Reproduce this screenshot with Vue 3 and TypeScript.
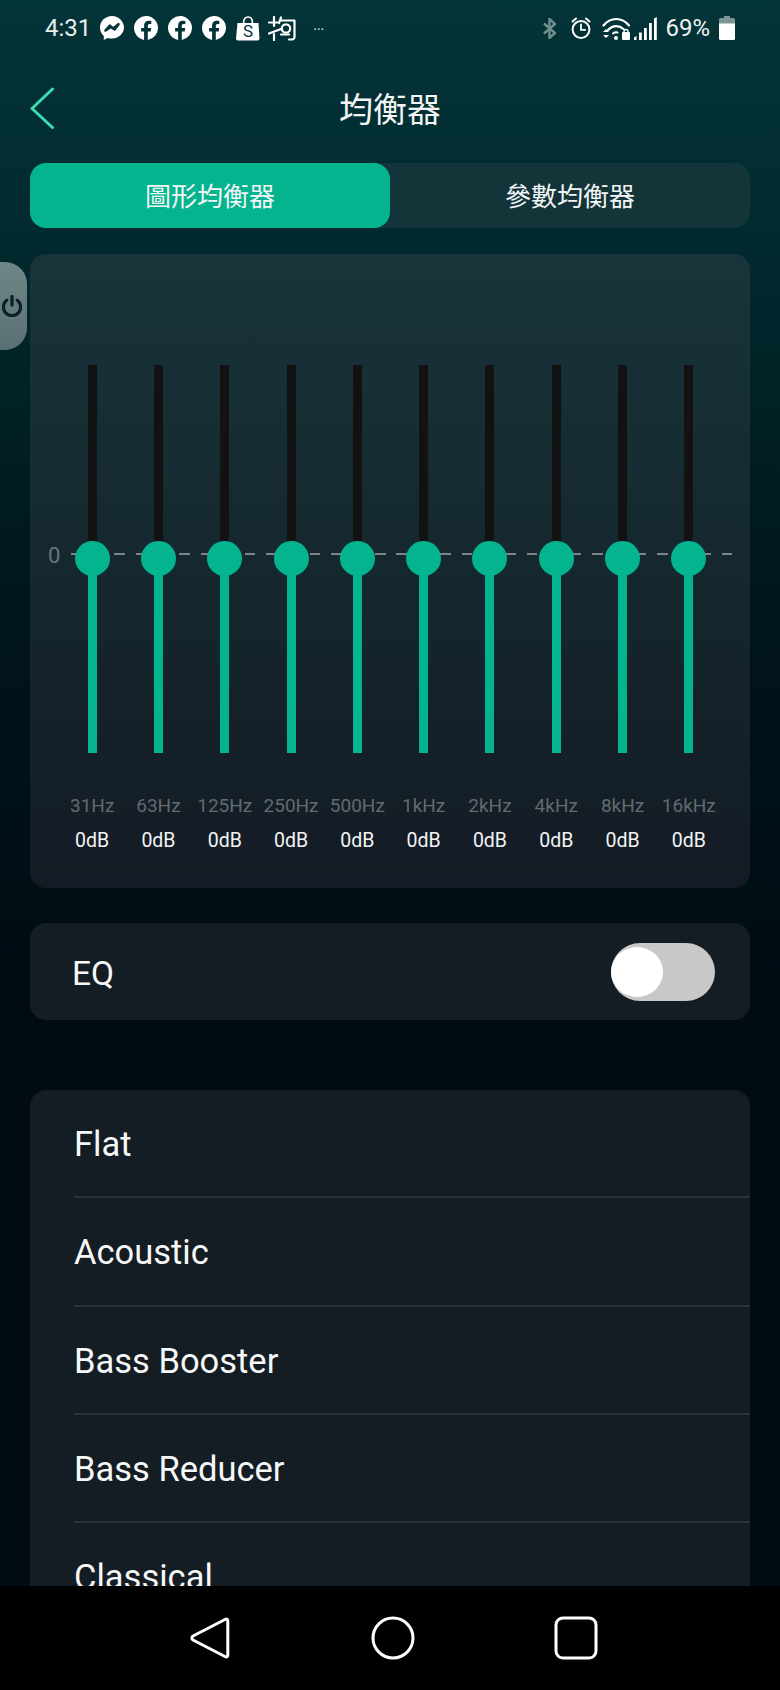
<script setup lang="ts">
const bands: string[] = ['31Hz','63Hz','125Hz','250Hz','500Hz','1kHz','2kHz','4kHz','8kHz','16kHz']
const presets: string[] = ['Flat','Acoustic','Bass Booster','Bass Reducer','Classical']
</script>

<template>
  <div class="phone">
    <main class="screen">
      <div class="status">
        <div class="status-left">
          <span class="time">4:31</span>
          <svg class="ic24" viewBox="0 0 24 24"><path fill="#fff" d="M12 0C5.3 0 0 5 0 11.5c0 3.4 1.4 6.4 3.8 8.4V24l3.9-2.1c1.4.4 2.8.6 4.3.6 6.7 0 12-5 12-11S18.700 0 12 0z"/><path fill="none" stroke="#04343a" stroke-width="2.600" stroke-linejoin="round" stroke-linecap="round" d="M5.500 14.500l4.300-4.800 3.400 2.800 5.300-4.300-4 5.300-3.600-2.500z"/></svg>
          <svg v-for="n in 3" :key="n" class="ic24" viewBox="0 0 24 24"><path fill="#fff" d="M24 12a12 12 0 1 0-13.900 11.900v-8.400H7.100V12h3V9.400c0-3 1.800-4.700 4.500-4.700 1.300 0 2.700.2 2.700.2v3h-1.500c-1.500 0-2 .9-2 1.900V12h3.400l-.5 3.500h-2.900v8.400A12 12 0 0 0 24 12z"/></svg>
          <svg class="bag" viewBox="0 0 24 25"><path fill="#fff" d="M1.500 7h21l1 15.500a2 2 0 0 1-2 2h-19.500a2 2 0 0 1-2-2z"/><path fill="none" stroke="#fff" stroke-width="1.700" d="M7.500 7c0-4 2-6 4.500-6s4.500 2 4.500 6"/><text x="12" y="21" text-anchor="middle" class="bag-s">S</text></svg>
          <svg class="logo" viewBox="0 0 28 25"><g fill="none" stroke="#fff" stroke-width="2.200" stroke-linecap="round" stroke-linejoin="round"><path d="M6 1v5M1 6.500h8.500M6 6.500V10M6 18v6"/><path d="M13 1.500 11 7M12 4.500h14.500V21a2.500 2.500 0 0 1-2.500 2.500h-3"/><path d="M1 17.500 13 13"/><circle cx="18" cy="12.500" r="4.200"/><path d="M13 18.500h8"/></g></svg>
          <span class="dots">…</span>
        </div>
        <div class="status-right">
          <svg class="bt" viewBox="0 0 13 21"><path fill="none" stroke="#6f8f8d" stroke-width="2.400" d="M1 5.500l11 9.500-5.500 5V1L12 6 1 15.500"/></svg>
          <svg class="alarm" viewBox="0 0 20 24"><g fill="none" stroke="#fff" stroke-linecap="round"><circle cx="10" cy="13.500" r="8.400" stroke-width="2"/><path stroke-width="1.800" d="M10 8.500v5.400h4.200"/><path stroke-width="2" d="M1.500 5.500 5 2.500M18.500 5.500 15 2.500"/></g></svg>
          <svg class="wifi" viewBox="0 0 28 24"><g fill="none" stroke="#fff" stroke-linecap="round"><path stroke-width="2.200" d="M1.500 9.500C8.500 .8 20 .8 27 9.500"/><path stroke-width="2.200" d="M6 14c4.500-5 11-5 15.500-1"/><path stroke-width="2" d="M11 17.500c1.300-1 3-1.300 4.500-1"/></g><circle cx="14" cy="22" r="2" fill="#fff"/><path fill="#fff" d="M1 16h6l-3-3zM1 19h6l-3 3z"/><rect x="20" y="16" width="8" height="8" rx="1" fill="#fff"/><path fill="none" stroke="#fff" stroke-width="1.400" d="M22 16.500v-1a2 2 0 0 1 4 0v1"/></svg>
          <svg class="signal" viewBox="0 0 23 23"><g fill="#fff"><path d="M0 20.500 2.500 19v4H0z"/><rect x="5" y="15.500" width="2.800" height="7.500"/><rect x="10" y="11" width="2.800" height="12"/><rect x="15" y="6" width="2.800" height="17"/><path d="M20 1.500 22.800 0v23H20z"/></g></svg>
          <span class="pct">69%</span>
          <svg class="battery" viewBox="0 0 16 24"><path fill="#7c9694" d="M5 0h6v2h3.500A1.500 1.500 0 0 1 16 3.500V8H0V3.500A1.500 1.500 0 0 1 1.500 2H5z"/><path fill="#fff" d="M0 7.500h16V22.500a1.500 1.500 0 0 1-1.500 1.500h-13A1.500 1.500 0 0 1 0 22.500z"/></svg>
        </div>
      </div>

      <header class="header">
        <svg class="back" viewBox="0 0 24 42"><path fill="none" stroke="#3bdcb0" stroke-width="3" stroke-linecap="round" stroke-linejoin="round" d="M22.500 2 2 21.500 22.500 40.500"/></svg>
        <h1 class="title">均衡器</h1>
      </header>

      <div class="tabs">
        <button class="tab active">圖形均衡器</button>
        <button class="tab">參數均衡器</button>
      </div>

      <section class="eq-card">
        <div class="zero-line"></div>
        <span class="zero">0</span>
        <div class="band" v-for="b in bands" :key="b">
          <div class="track">
            <div class="track-up"></div>
            <div class="track-down"></div>
            <div class="knob"></div>
          </div>
          <span class="freq">{{ b }}</span>
          <span class="db">0dB</span>
        </div>
      </section>

      <section class="eq-row">
        <span class="eq-label">EQ</span>
        <div class="toggle"><div class="toggle-knob"></div></div>
      </section>

      <section class="list">
        <div class="row" v-for="p in presets" :key="p">{{ p }}</div>
      </section>

      <div class="side-power">
        <svg viewBox="1.500 .5 21 23"><g fill="none" stroke="#0a2226" stroke-width="3.400" stroke-linecap="round"><path d="M12 2v9"/><path d="M6.500 6a9 9 0 1 0 11 0"/></g></svg>
      </div>
    </main>

    <nav class="nav">
      <svg class="nav-ic" viewBox="0 0 40 44"><path fill="none" stroke="#fff" stroke-width="3" stroke-linejoin="round" d="M35 3.500c1-.8 2.800-.6 2.800 1.300v34.400c0 1.900-1.800 2.100-2.800 1.300L3 24c-1.500-1.200-1.500-2.800 0-4z"/></svg>
      <svg class="nav-ic" viewBox="0 0 44 44"><circle cx="22" cy="22" r="20" fill="none" stroke="#fff" stroke-width="3"/></svg>
      <svg class="nav-ic" viewBox="0 0 44 44"><rect x="2" y="2" width="40" height="40" rx="7" fill="none" stroke="#fff" stroke-width="3"/></svg>
    </nav>
  </div>
</template>

<style scoped>
.phone {
  width: 780px;
  height: 1690px;
  display: flex;
  flex-direction: column;
  overflow: hidden;
  background: #000;
  font-family: Roboto, "Noto Sans CJK TC", sans-serif;
  color: #fff;
}
.screen {
  position: relative;
  flex: 1;
  min-height: 0;
  overflow: hidden;
  background: linear-gradient(180deg, #033437 0, #012a2e 240px, #00161c 600px, #000b12 1000px, #000b12 100%);
}
.status {
  height: 56px;
  display: flex;
  justify-content: space-between;
  align-items: center;
  padding: 0 45px;
}
.status-left, .status-right {
  display: flex;
  align-items: center;
}
.time {
  font-size: 24px;
  color: #e9efee;
  width: 55px;
}
.ic24 { width: 24px; height: 24px; margin-right: 10px; }
.bag { width: 24px; height: 25px; margin-right: 8px; }
.bag-s { font: 400 17px Roboto, sans-serif; fill: #04343a; }
.logo { width: 28px; height: 25px; }
.dots {
  font-size: 17px;
  line-height: 14px;
  margin-left: 17px;
  margin-top: -8px;
  width: 14px;
  color: #c5d0cf;
}
.bt { width: 13px; height: 21px; margin-right: 15px; }
.alarm { width: 20px; height: 24px; margin-right: 11px; }
.wifi { width: 28px; height: 24px; margin-right: 4px; }
.signal { width: 23px; height: 23px; margin-right: 8px; }
.pct { font-size: 24px; color: #eef3f2; margin-right: 9px; }
.battery { width: 16px; height: 24px; }

.header {
  position: relative;
  height: 107px;
  display: flex;
  align-items: center;
  justify-content: center;
}
.back {
  position: absolute;
  left: 30px;
  top: 31px;
  width: 24px;
  height: 42px;
}
.title {
  margin: 0;
  font-size: 34px;
  font-weight: 400;
  line-height: 44px;
  color: #f4f6f6;
}
.tabs {
  margin: 0 30px;
  height: 65px;
  display: flex;
  background: #13353a;
  border-radius: 16px;
}
.tab {
  flex: 1;
  border: 0;
  padding: 0 0 2px;
  background: transparent;
  color: #f2f5f5;
  font-family: inherit;
  font-size: 26px;
  border-radius: 16px;
}
.tab.active { background: #04b48f; }

.eq-card {
  position: relative;
  margin: 26px 30px 0;
  padding: 111px 28px 35px 29px;
  display: flex;
  border-radius: 16px;
  background: linear-gradient(180deg, #18343a 0%, #15262e 55%, #141b24 100%);
}
.zero-line {
  position: absolute;
  left: 41px;
  width: 661px;
  top: 299px;
  height: 2px;
  background: repeating-linear-gradient(90deg, #7d8589 0, #7d8589 10.800px, transparent 10.800px, transparent 21.700px);
}
.zero {
  position: absolute;
  left: 18px;
  top: 289px;
  font-size: 22px;
  line-height: 26px;
  color: #6c7479;
}
.band {
  flex: 1 1 0;
  min-width: 0;
  display: flex;
  flex-direction: column;
  align-items: center;
}
.track {
  position: relative;
  width: 9px;
  height: 388px;
  display: flex;
  flex-direction: column;
}
.track-up { flex: 1; background: #121212; }
.track-down { flex: 1; background: #04b48f; }
.knob {
  position: absolute;
  left: 50%;
  top: 176px;
  width: 35px;
  height: 35px;
  margin-left: -17.500px;
  border-radius: 50%;
  background: #04b48f;
}
.freq {
  margin-top: 41px;
  font-size: 19px;
  line-height: 24px;
  color: #636a70;
  white-space: nowrap;
}
.db {
  margin-top: 11px;
  font-size: 19.500px;
  line-height: 24px;
  color: #f2f4f4;
}

.eq-row {
  margin: 35px 30px 0;
  height: 97px;
  padding: 3px 35px 0 42px;
  box-sizing: border-box;
  display: flex;
  align-items: center;
  justify-content: space-between;
  background: #141c24;
  border-radius: 16px;
}
.eq-label { font-size: 33.500px; color: #f6f7f7; }
.toggle {
  position: relative;
  width: 104px;
  height: 58px;
  margin-top: -3px;
  border-radius: 29px;
  background: #c8c8c8;
}
.toggle-knob {
  position: absolute;
  left: 0;
  top: 4px;
  width: 52px;
  height: 50px;
  border-radius: 50%;
  background: #fff;
}

.list {
  margin: 70px 30px 0;
  padding-left: 44px;
  background: #141c24;
  border-radius: 16px 16px 0 0;
}
.row {
  box-sizing: border-box;
  height: 108.300px;
  padding-top: 2px;
  display: flex;
  align-items: center;
  font-size: 34.500px;
  color: #f6f7f7;
  border-bottom: 2px solid #2a3139;
}
.side-power {
  position: absolute;
  left: 0;
  top: 262px;
  width: 27px;
  height: 88px;
  display: flex;
  align-items: center;
  justify-content: flex-end;
  padding-right: 5px;
  box-sizing: border-box;
  border-radius: 0 22px 22px 0;
  background: linear-gradient(180deg, #6f8686, #5b7074);
}
.side-power svg { width: 20px; height: 22px; }

.nav {
  flex: 0 0 104px;
  display: flex;
  justify-content: center;
  align-items: flex-start;
  gap: 139px;
  padding: 30px 0 0 5px;
  box-sizing: border-box;
  background: #000;
}
.nav-ic { width: 44px; height: 44px; }
</style>

<style>
html, body { margin: 0; background: #000; }
</style>
